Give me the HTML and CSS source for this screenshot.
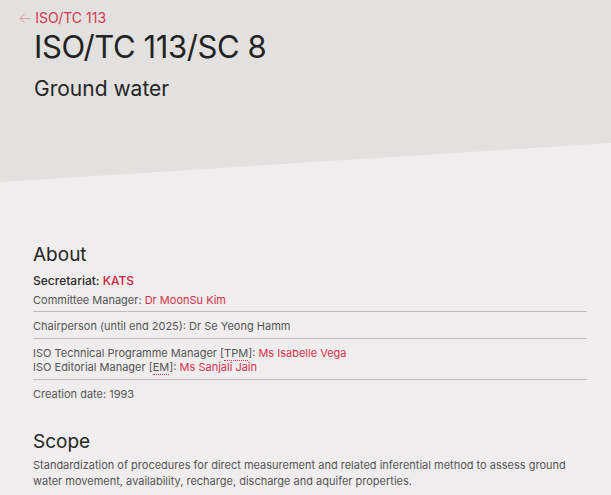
FILE: index.html
```html
<!DOCTYPE html>
<html lang="en">
<head>
<meta charset="utf-8">
<title>ISO/TC 113/SC 8</title>
<link rel="stylesheet" href="styles.css">
</head>
<body>
<header class="hero">
  <a class="back" href="#"><span class="arrow">←</span>ISO/TC 113</a>
  <h1 class="title">ISO/TC 113/SC 8</h1>
  <p class="subtitle">Ground water</p>
</header>
<main class="content">
  <section class="about">
    <h2 class="section-title">About</h2>
    <div class="row first">
      <p class="secretariat">Secretariat: <a href="#" class="red">KATS</a></p>
      <p class="line manager">Committee Manager: <a href="#" class="red">Dr MoonSu Kim</a></p>
    </div>
    <div class="row">
      <p class="line">Chairperson (until end 2025): Dr Se Yeong Hamm</p>
    </div>
    <div class="row">
      <p class="line">ISO Technical Programme Manager [<abbr title="Technical Programme Manager">TPM</abbr>]: <a href="#" class="red">Ms Isabelle Vega</a></p>
      <p class="line">ISO Editorial Manager [<abbr title="Editorial Manager">EM</abbr>]: <a href="#" class="red">Ms Sanjali Jain</a></p>
    </div>
    <div class="row last">
      <p class="line">Creation date: 1993</p>
    </div>
  </section>
  <section class="scope">
    <h2 class="section-title">Scope</h2>
    <p class="scope-text">Standardization of procedures for direct measurement and related inferential method to assess ground water movement, availability, recharge, discharge and aquifer properties.</p>
  </section>
</main>
</body>
</html>
```
FILE: styles.css
```css
* { box-sizing: border-box; }
html, body { margin: 0; padding: 0; }
body {
  background: #efeded;
  font-family: Inter, "Noto Sans", sans-serif;
  color: #2b2b2b;
}
a { text-decoration: none; }
.hero {
  background: #e2e1df;
  height: 182px;
  padding: 9px 24px 0 34px;
  clip-path: polygon(0 0, 100% 0, 100% 143px, 0 182px);
}
.back {
  display: flex;
  align-items: center;
  margin-left: -16px;
  color: #d4364d;
  font-size: 14px;
  line-height: 18px;
}
.arrow {
  color: #e6a0aa;
  margin-right: 3px;
  font-size: 15px;
  font-weight: 300;
}
.title {
  margin: 1px 0 0;
  font-size: 31px;
  font-weight: 400;
  line-height: 38px;
  color: #232323;
  letter-spacing: -0.4px;
}
.subtitle {
  margin: 9px 0 0;
  font-size: 21px;
  line-height: 28px;
  font-weight: 400;
  color: #252525;
}
.content {
  padding: 60px 24px 0 33px;
}
.section-title {
  margin: 0;
  font-size: 19px;
  font-weight: 400;
  line-height: 26px;
  color: #252525;
}
.about .section-title { margin-bottom: 3px; }
.row {
  border-bottom: 1px solid #bdbbbb;
  padding: 7px 0 5px;
}
.row.first { padding: 0 0 4px; }
.row.last { border-bottom: none; }
.row p { margin: 0; }
.row p.manager { margin-top: 3px; }
.secretariat {
  font-size: 12px;
  font-weight: 500;
  line-height: 19px;
  color: #2b2b2b;
}
.line {
  font-size: 11px;
  line-height: 14px;
  color: #555;
}
.red { color: #d5334b; }
.secretariat .red { color: #d0213d; }
abbr {
  text-decoration: none;
  border-bottom: 1px dotted #d5334b;
}
.scope { margin-top: 23px; }
.scope .section-title { margin-bottom: 2px; }
.scope-text {
  margin: 0;
  font-size: 11px;
  line-height: 16px;
  color: #555;
}
```
